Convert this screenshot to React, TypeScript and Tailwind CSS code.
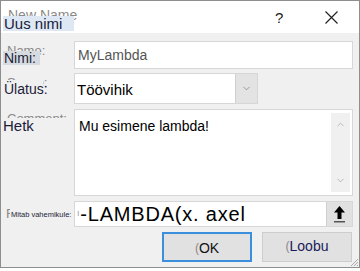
import { ChevronDown, ChevronUp } from "lucide-react";

const font = { fontFamily: '"Liberation Sans", Arial, sans-serif' };

export default function App() {
    return (
        <div className="w-[360px] h-[271px] bg-white" style={font}>
            <div className="w-[360px] h-[268px] border border-[#8e8e8e] flex flex-col">
                <div className="h-[32px] bg-white relative shrink-0">
                    <span className="absolute left-[7px] top-[4px] text-[14px] text-[#8a8a8a]">New Name</span>
                    <span className="absolute left-[2px] top-[15px] w-[71px] h-[15px] bg-[#dde8f4] text-[15px] leading-[15px] text-[#1a1a3a] pl-[1px]">Uus nimi</span>
                    <span className="absolute left-[274px] top-[6px] text-[15px] text-[#222]">?</span>
                    <svg className="absolute left-[324px] top-[10px]" width="13" height="13" viewBox="0 0 13 13">
                        <path d="M0.5 0.5 L12.5 12.5 M12.5 0.5 L0.5 12.5" stroke="#222" strokeWidth="1.2" />
                    </svg>
                </div>
                <div className="flex-1 bg-[#f0f0f0] pt-[8px] pr-[6px] flex flex-col relative">
                    <div className="flex h-[28px]">
                        <div className="relative w-[73px] shrink-0">
                            <span className="absolute left-[6px] top-[0px] text-[13px] text-[#8a8a8a]">Name:</span>
                            <span className="absolute left-[2px] top-[10px] w-[37px] h-[14px] bg-[#d6dbe0] text-[14px] leading-[14px] text-[#1c1c3a] pl-[1px]">Nimi:</span>
                        </div>
                        <div className="flex-1 bg-white border border-[#d7d7d7] flex items-center pl-[3px] text-[14px] text-[#555]">MyLambda</div>
                    </div>
                    <div className="flex h-[31px] mt-[4px]">
                        <div className="relative w-[73px] shrink-0">
                            <span className="absolute left-[6px] top-[0px] text-[13px] text-[#8a8a8a]">Scope:</span>
                            <span className="absolute left-[2px] top-[7px] w-[40px] h-[16px] bg-[#f0f0f0] text-[14px] leading-[14px] text-[#1c1c3a] pl-[1px] pt-[2px]">Ülatus:</span>
                        </div>
                        <div className="w-[184px] flex border border-[#d7d7d7]">
                            <div className="flex-1 bg-white flex items-center pl-[2px] pt-[4px] text-[15px] text-black">Töövihik</div>
                            <div className="w-[22px] bg-[#e3e3e3] border-l border-[#d0d0d0] flex items-center justify-center">
                                <ChevronDown className="w-[11px] h-[11px] text-[#777]" strokeWidth={1.5} />
                            </div>
                        </div>
                    </div>
                    <div className="flex h-[87px] mt-[5px]">
                        <div className="relative w-[73px] shrink-0">
                            <span className="absolute left-[6px] top-[0px] text-[13px] text-[#8a8a8a]">Comment:</span>
                            <span className="absolute left-[2px] top-[9px] w-[64px] h-[16px] text-[15px] leading-[16px] text-[#1c1c3a] bg-[#f0f0f0]">Hetk</span>
                        </div>
                        <div className="flex-1 bg-white border border-[#d7d7d7] flex">
                            <div className="flex-1 pl-[4px] pt-[9px] text-[14px] leading-[15px] text-black">Mu esimene lambda!</div>
                            <div className="w-[19px] bg-[#f0f0f0] my-[3px] mr-[2px] flex flex-col items-center justify-between py-[6px]">
                                <ChevronUp className="w-[11px] h-[11px] text-[#a0a0a0]" strokeWidth={1.5} />
                                <ChevronDown className="w-[11px] h-[11px] text-[#a0a0a0]" strokeWidth={1.5} />
                            </div>
                        </div>
                    </div>
                    <div className="flex h-[26px] mt-[5px]">
                        <div className="relative w-[73px] shrink-0">
                            <span className="absolute left-[5px] top-[3px] text-[13px] text-[#8a8a8a] whitespace-nowrap">Refers to:</span>
                            <span className="absolute left-[9px] top-[8px] h-[11px] whitespace-nowrap text-[7.5px] leading-[11px] text-[#1c1c3a] bg-[#f0f0f0] px-[1px]">Mitab vahemikule:</span>
                        </div>
                        <div className="flex-1 flex border border-[#d7d7d7]">
                            <div className="flex-1 bg-white flex items-center pl-[2px] text-[20px] tracking-[0.8px] text-black whitespace-nowrap">
                                <span className="text-[9px] text-[#999]">ı</span>-LAMBDA(x. axel
                            </div>
                            <div className="w-[26px] bg-[#e1e1e1] border-l border-[#cfcfcf] flex items-center justify-center">
                                <svg width="13" height="18" viewBox="0 0 13 18">
                                    <path d="M6.5 1 L12 7.5 L8.5 7.5 L8.5 14 L4.5 14 L4.5 7.5 L1 7.5 Z" fill="#000" />
                                    <rect x="1" y="16" width="11" height="1.5" fill="#555" />
                                </svg>
                            </div>
                        </div>
                    </div>
                    <div className="flex h-[30px] mt-[5px] justify-end gap-[10px] pr-[1px]">
                        <button className="w-[90px] bg-[#e1e1e1] border-2 border-[#3c8fdc] text-[14px] text-[#111] flex items-center justify-center pt-[2px]">
                            <span className="text-[#888] text-[12px]">(</span>OK
                        </button>
                        <button className="w-[90px] bg-[#e1e1e1] border border-[#cdcdcd] text-[14px] text-[#1a1a5a] flex items-center justify-center pb-[2px]">
                            <span className="text-[#888] text-[12px]">(</span>Loobu
                        </button>
                    </div>
                    <svg className="absolute right-[0px] bottom-[0px]" width="10" height="10" viewBox="0 0 10 10">
                        <path d="M9 2 L2 9 M9 5 L5 9 M9 8 L8 9" stroke="#aaa" strokeWidth="1" />
                    </svg>
                </div>
            </div>
        </div>
    );
}
